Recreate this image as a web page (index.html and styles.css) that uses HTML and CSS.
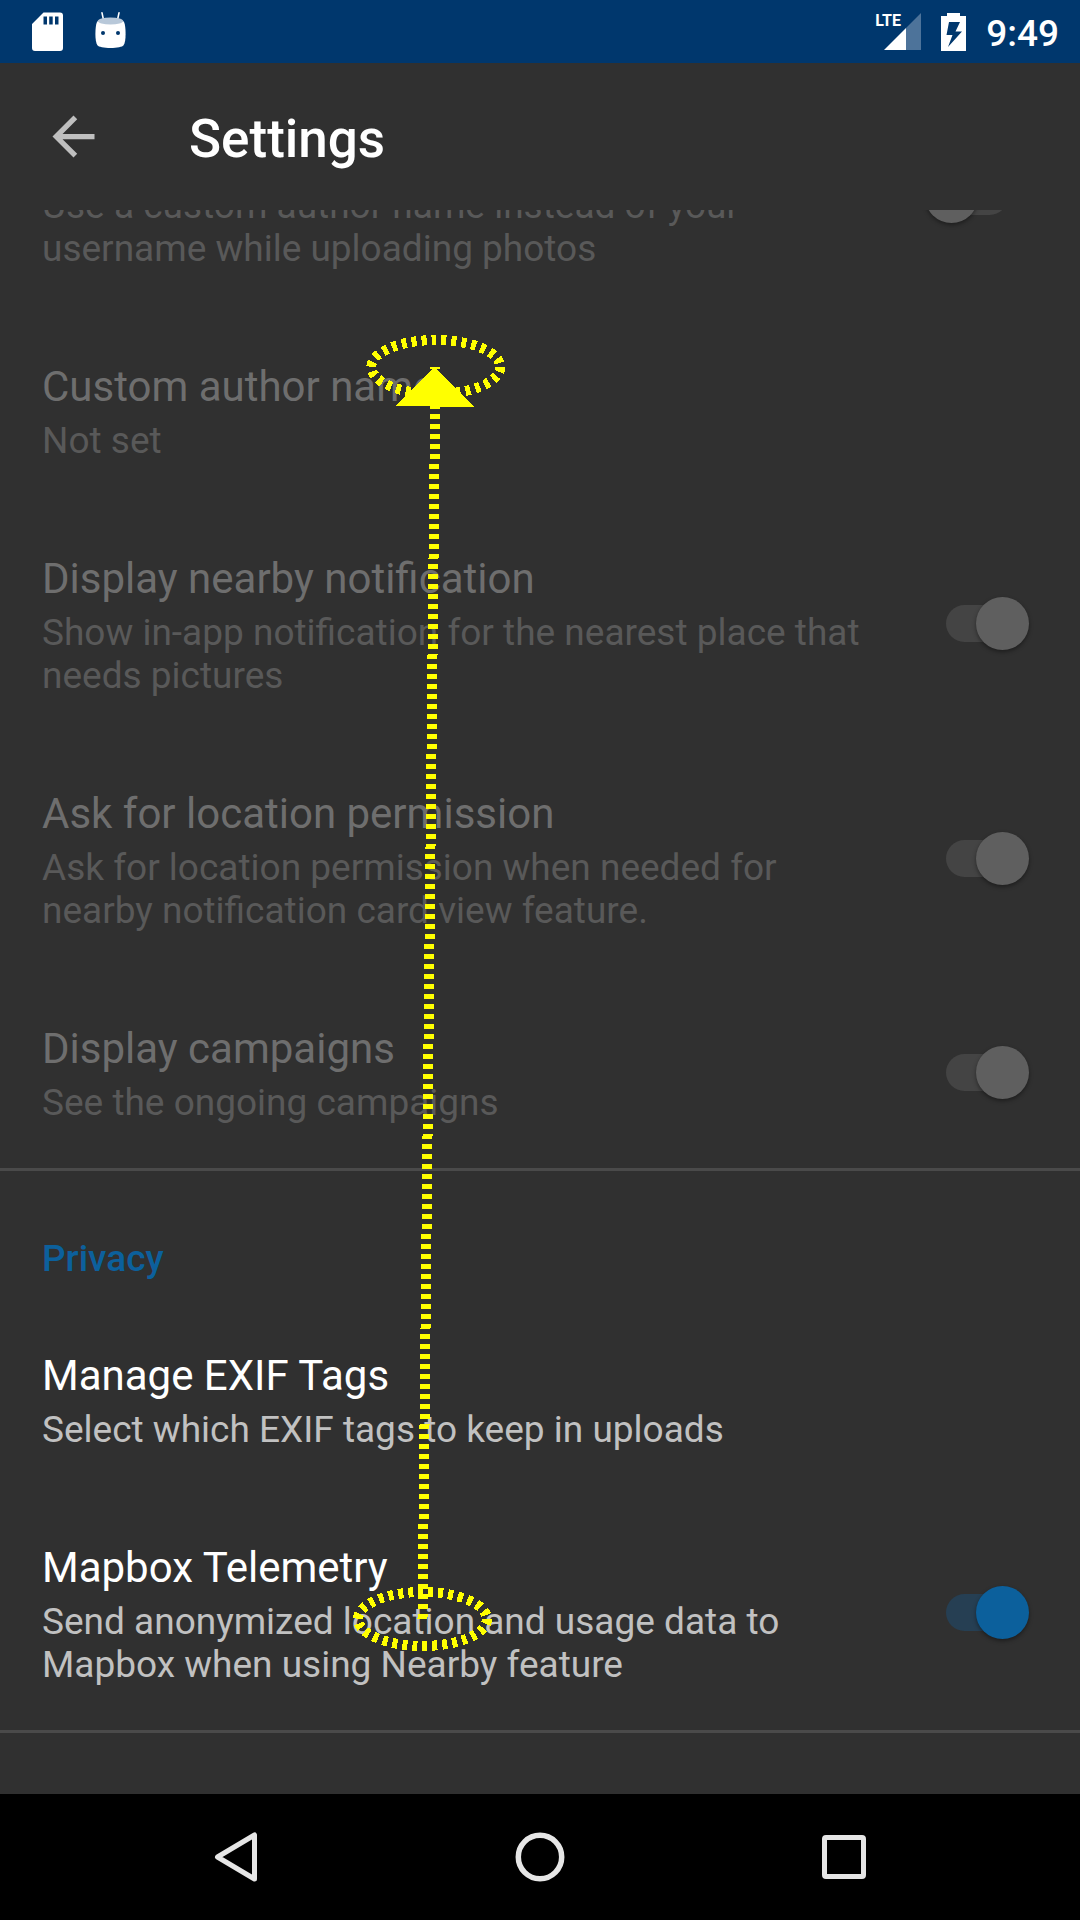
FILE: index.html
```html
<!DOCTYPE html>
<html lang="en">
<head>
<meta charset="utf-8">
<meta name="viewport" content="width=device-width, initial-scale=1">
<title>Settings</title>
<link rel="stylesheet" href="styles.css">
</head>
<body>
<div class="app">
  <div class="status-bar">
    <div class="status-group">
      <svg class="icon" width="31" height="39" viewBox="0 0 31 39" aria-hidden="true">
        <path fill="#fff" fill-rule="evenodd" d="M11.500 .5H28a3 3 0 0 1 3 3V36a3 3 0 0 1-3 3H3a3 3 0 0 1-3-3V12zM11.500 4.500V12.500H15V4.500zM17.200 4.500V12.500H20.700V4.500zM23 4.500V12.500H26.500V4.500z"/>
      </svg>
      <svg class="icon" width="31" height="39" viewBox="0 0 31 39" aria-hidden="true">
        <path stroke="#fff" stroke-width="1.600" stroke-linecap="round" d="M7 .9l1.500 7M24 .9l-1.500 7"/>
        <path fill="#fff" d="M2.800 9C1 10 .4 17 .4 22s.6 9 2 11.300C3.500 35 9 36 15.500 36s12-1 13.100-2.700C30 31 30.600 27 30.600 22S30 10 28.200 9z"/>
        <ellipse cx="15.500" cy="9" rx="12.700" ry="3.500" fill="#b8c8d9"/>
        <circle cx="8" cy="21" r="2" fill="#00376d"/>
        <circle cx="23" cy="21" r="2" fill="#00376d"/>
      </svg>
    </div>
    <div class="status-group status-right">
      <div class="signal">
        <span class="network">LTE</span>
        <svg width="37" height="37" viewBox="0 0 37 37" aria-hidden="true">
          <path fill="#4d739a" d="M37 0V37H22V15z"/>
          <path fill="#fff" d="M22 15V37H0z"/>
        </svg>
      </div>
      <svg class="icon" width="25" height="38" viewBox="0 0 25 38" aria-hidden="true">
        <path fill="#fff" fill-rule="evenodd" d="M6 0H19V3H25V38H0V3H6zM8 9L5.500 22H11.500L7 34L21 18.500H14.500L19 9z"/>
      </svg>
      <span class="clock">9:49</span>
    </div>
  </div>

  <header class="toolbar">
    <button class="back" type="button" aria-label="Navigate up">
      <svg width="63" height="63" viewBox="0 0 24 24" aria-hidden="true"><path fill="#bfbfbf" d="M20 11H7.830l5.590-5.590L12 4l-8 8 8 8 1.410-1.410L7.830 13H20v-2z"/></svg>
    </button>
    <h1 class="title">Settings</h1>
  </header>

  <main class="viewport">
    <div class="list">
      <section class="category">
        <div class="row disabled untitled">
          <label class="text" for="use-author">
            <span class="summary">Use a custom author name instead of your username while uploading photos</span>
          </label>
          <input class="switch" type="checkbox" id="use-author" disabled>
        </div>
        <div class="row disabled">
          <div class="text">
            <span class="name">Custom author name</span>
            <span class="summary">Not set</span>
          </div>
        </div>
        <div class="row disabled">
          <label class="text" for="nearby">
            <span class="name">Display nearby notification</span>
            <span class="summary">Show in-app notification for the nearest place that needs pictures</span>
          </label>
          <input class="switch" type="checkbox" id="nearby" checked disabled>
        </div>
        <div class="row disabled">
          <label class="text" for="location">
            <span class="name">Ask for location permission</span>
            <span class="summary">Ask for location permission when needed for nearby notification card view feature.</span>
          </label>
          <input class="switch" type="checkbox" id="location" checked disabled>
        </div>
        <div class="row disabled">
          <label class="text" for="campaigns">
            <span class="name">Display campaigns</span>
            <span class="summary">See the ongoing campaigns</span>
          </label>
          <input class="switch" type="checkbox" id="campaigns" checked disabled>
        </div>
      </section>
      <section class="category">
        <h2 class="heading">Privacy</h2>
        <div class="row">
          <div class="text">
            <span class="name">Manage EXIF Tags</span>
            <span class="summary">Select which EXIF tags to keep in uploads</span>
          </div>
        </div>
        <div class="row">
          <label class="text" for="telemetry">
            <span class="name">Mapbox Telemetry</span>
            <span class="summary">Send anonymized location and usage data to Mapbox when using Nearby feature</span>
          </label>
          <input class="switch" type="checkbox" id="telemetry" checked>
        </div>
      </section>
    </div>
  </main>

  <nav class="nav-bar">
    <button class="nav-button" type="button" aria-label="Back">
      <svg width="50" height="50" viewBox="0 0 50 50" aria-hidden="true"><path fill="none" stroke="#e6e6e6" stroke-width="5" stroke-linejoin="round" d="M43.500 3V47L6.500 25z"/></svg>
    </button>
    <button class="nav-button" type="button" aria-label="Home">
      <svg width="50" height="50" viewBox="0 0 50 50" aria-hidden="true"><circle cx="25" cy="25" r="21.700" fill="none" stroke="#e6e6e6" stroke-width="5.500"/></svg>
    </button>
    <button class="nav-button" type="button" aria-label="Recent apps">
      <svg width="50" height="50" viewBox="0 0 50 50" aria-hidden="true"><rect x="5.500" y="5.500" width="39" height="39" rx="1.500" fill="none" stroke="#e6e6e6" stroke-width="5"/></svg>
    </button>
  </nav>

  <svg class="gesture" width="160" height="1330" viewBox="350 330 160 1330" aria-hidden="true">
    <g fill="none" stroke="#ff0" stroke-width="10" stroke-dasharray="5 5" shape-rendering="crispEdges">
      <ellipse cx="422.500" cy="1619" rx="64.500" ry="27"/>
      <ellipse cx="435.800" cy="367" rx="64.500" ry="27"/>
      <path d="M422.500 1619L435.500 367"/>
    </g>
    <path fill="#ff0" shape-rendering="crispEdges" d="M435 367L474 407L395 406z"/>
  </svg>
</div>
</body>
</html>
```
FILE: styles.css
```css
* {
  box-sizing: border-box;
}

body {
  margin: 0;
  background: #303030;
  color: #fff;
  font-family: Roboto, "Noto Sans", sans-serif;
}

button {
  display: flex;
  align-items: center;
  justify-content: center;
  padding: 0;
  border: 0;
  background: none;
}

.app {
  position: relative;
  display: flex;
  flex-direction: column;
  height: 100vh;
}

.status-bar {
  display: flex;
  justify-content: space-between;
  align-items: center;
  height: 63px;
  flex: none;
  padding: 0 21px 0 32px;
  background: #00376d;
}

.status-group {
  display: flex;
  align-items: center;
  gap: 32px;
}

.status-right {
  gap: 20px;
}

.signal {
  position: relative;
  display: flex;
  padding-left: 9px;
}

.network {
  position: absolute;
  left: 0;
  top: 0;
  font-size: 16px;
  line-height: 16px;
  font-weight: 700;
}

.clock {
  padding-top: 3px;
  font-size: 37px;
  line-height: 43px;
  font-weight: 500;
}

.toolbar {
  display: flex;
  align-items: center;
  gap: 84px;
  height: 147px;
  flex: none;
  padding: 0 42px;
}

.title {
  margin: 0;
  padding-top: 4px;
  font-size: 53px;
  line-height: 62px;
  font-weight: 500;
}

.viewport {
  flex: 1 1 0;
  min-height: 0;
  overflow: hidden;
}

/* The list is scrolled partway through its first item. */
.list {
  margin-top: -133px;
}

.category {
  padding-bottom: 2px;
  border-bottom: 3px solid #4a4a4a;
}

.heading {
  margin: 0;
  padding: 66px 42px 21px;
  color: #0c609c;
  font-size: 37px;
  line-height: 43px;
  font-weight: 500;
}

.row {
  display: flex;
  align-items: center;
  gap: 42px;
  padding: 0 51px 0 42px;
}

.text {
  display: flex;
  flex-direction: column;
  flex: 1;
  gap: 8px;
  padding: 50px 0 42px;
}

.untitled .text {
  padding-top: 107px;
}

.name {
  font-size: 42px;
  line-height: 49px;
}

.summary {
  color: #c1c1c1;
  font-size: 37px;
  line-height: 43px;
}

.disabled .name {
  color: #6e6e6e;
}

.disabled .summary {
  color: #595959;
}

.switch {
  appearance: none;
  position: relative;
  flex: none;
  width: 104px;
  height: 53px;
  margin: 4px 0 0;
}

.switch::before {
  content: "";
  position: absolute;
  inset: 8px 21px;
  border-radius: 19px;
  background: #263f53;
}

.switch::after {
  content: "";
  position: absolute;
  top: 0;
  left: 0;
  width: 53px;
  height: 53px;
  border-radius: 50%;
  background: #0c609c;
  box-shadow: 0 2px 4px rgba(0, 0, 0, 0.4);
}

.switch:checked::after {
  left: auto;
  right: 0;
}

.switch:disabled::before {
  background: #444;
}

.switch:disabled::after {
  background: #5f5f5f;
}

.nav-bar {
  display: flex;
  height: 126px;
  flex: none;
  padding: 0 84px;
  background: #000;
}

.nav-button {
  flex: 1;
}

.gesture {
  position: absolute;
  left: 350px;
  top: 330px;
  pointer-events: none;
}
```
